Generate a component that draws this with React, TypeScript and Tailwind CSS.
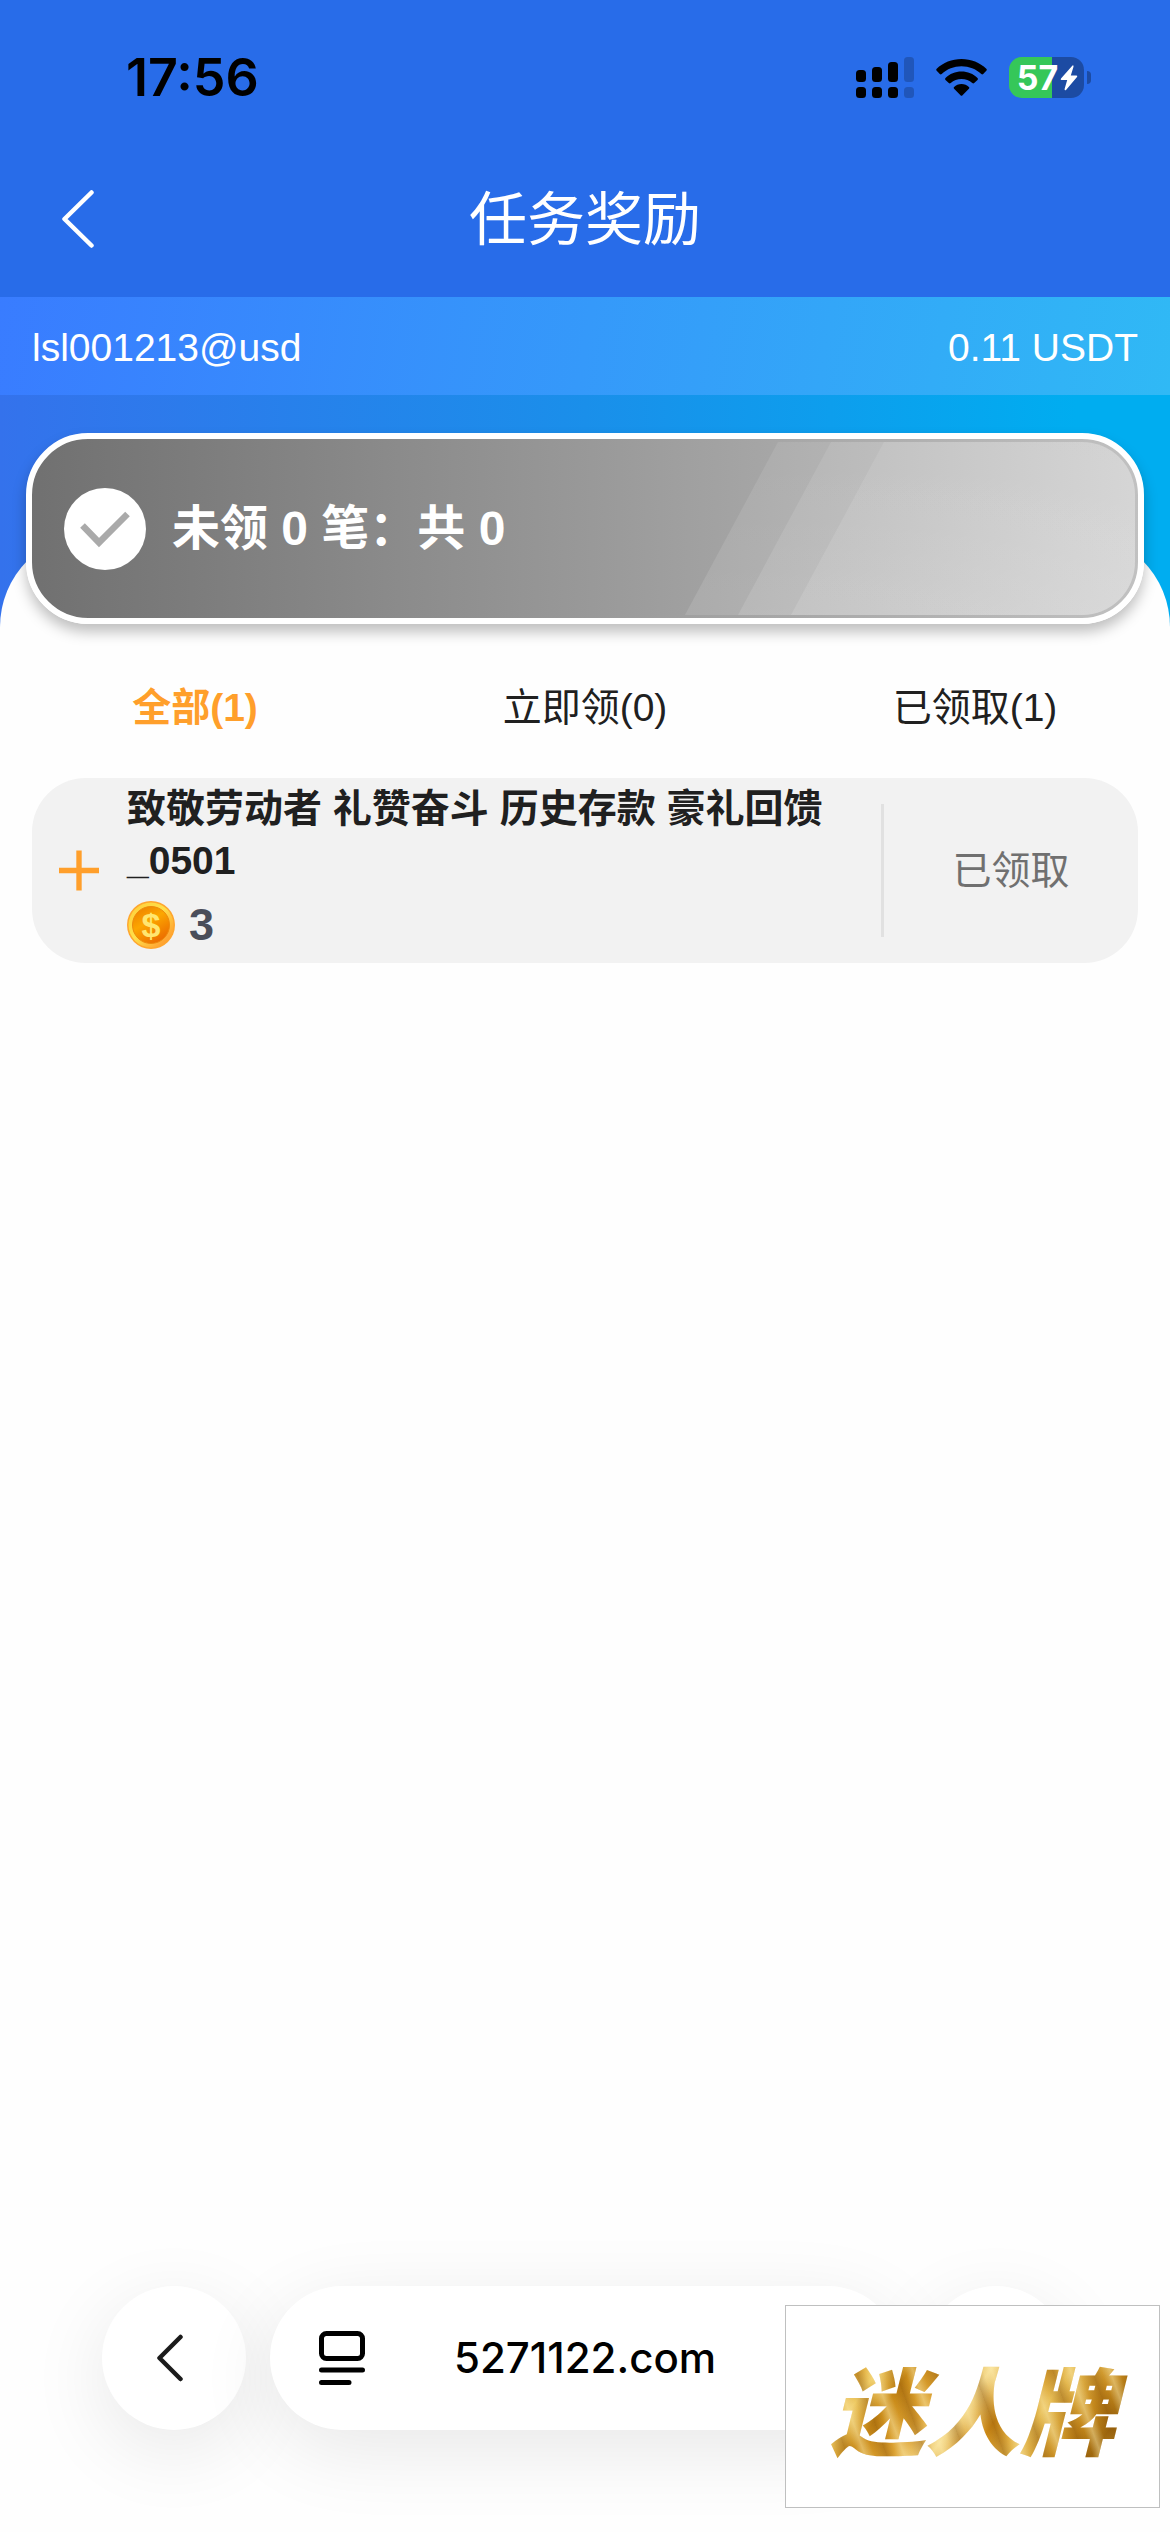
import React, { useState } from 'react';

const tabs = [
  { id: 'all', label: '全部', count: 1 },
  { id: 'ready', label: '立即领', count: 0 },
  { id: 'claimed', label: '已领取', count: 1 },
];

const rewards = [
  { id: 1, title: '致敬劳动者 礼赞奋斗 历史存款 豪礼回馈_0501', amount: 3, status: '已领取', tab: 'claimed' },
];

function SignalIcon() {
  return (
    <svg width="58" height="41" viewBox="0 0 58 41" aria-hidden="true">
      <rect x="0" y="13" width="10" height="12" rx="3.5" />
      <rect x="16" y="10" width="10" height="15" rx="3.5" />
      <rect x="32" y="5" width="10" height="20" rx="3.5" />
      <rect x="48" y="0" width="10" height="25" rx="3.5" opacity="0.2" />
      <rect x="0" y="30" width="10" height="11" rx="3.5" />
      <rect x="16" y="30" width="10" height="11" rx="3.5" />
      <rect x="32" y="30" width="10" height="11" rx="3.5" />
      <rect x="48" y="30" width="10" height="11" rx="3.5" opacity="0.2" />
    </svg>
  );
}

function WifiIcon() {
  return (
    <svg width="51" height="37" viewBox="0 0 51 37" aria-hidden="true">
      <path d="M25.500 0C35 0 44 3.600 50.300 9.800Q51.300 10.800 50.300 11.800L47.200 15Q46.300 15.900 45.300 15C40 10.100 33 7.300 25.500 7.300S11 10.100 5.700 15Q4.700 15.900 3.800 15L.7 11.800Q-.3 10.800 .7 9.800C7 3.600 16 0 25.500 0Z" />
      <path d="M25.500 12.500C31.700 12.500 37.300 14.900 41.500 18.900Q42.500 19.900 41.500 20.900L38.200 24.100Q37.300 25 36.300 24.100C33.400 21.500 29.600 20 25.500 20S17.600 21.500 14.700 24.100Q13.700 25 12.800 24.100L9.500 20.900Q8.500 19.900 9.500 18.900C13.700 14.900 19.300 12.500 25.500 12.500Z" />
      <path d="M25.500 25C28.400 25 31 26.100 32.900 27.900Q33.800 28.800 32.900 29.700L26.500 36.200Q25.500 37.200 24.500 36.200L18.100 29.700Q17.200 28.800 18.100 27.900C20 26.100 22.600 25 25.500 25Z" />
    </svg>
  );
}

function Battery() {
  return (
    <div className="flex items-center gap-[3px]">
      <div className="flex h-[41px] w-[75px] items-center justify-center gap-0.5 rounded-[13px] bg-[linear-gradient(90deg,#35c759_43px,#1c4ba3_43px)] pl-0.5 text-white">
        <span className="text-[34px] leading-none font-bold">57</span>
        <svg width="18" height="28" viewBox="0 0 18 26" fill="currentColor" aria-hidden="true">
          <path d="M12.500 0.500L1 13.500Q0 15 1.700 15H7.200L4.600 24Q4.500 26 6 25L17 12Q18 10.500 16.400 10.500H10.800L13.500 1.800Q13.700 -.4 12.500 .5Z" />
        </svg>
      </div>
      <div className="h-[13px] w-1 rounded-r-full bg-[#1c4ba3]" />
    </div>
  );
}

function CoinIcon() {
  return (
    <svg width="48" height="48" viewBox="0 0 48 48" aria-hidden="true">
      <defs>
        <linearGradient id="rim" x1="0" y1="0.2" x2="0.8" y2="1">
          <stop offset="0" stopColor="#ffd13c" />
          <stop offset="0.45" stopColor="#ffe04a" />
          <stop offset="1" stopColor="#ff9a2e" />
        </linearGradient>
        <linearGradient id="face" x1="0.2" y1="0" x2="0.8" y2="1">
          <stop offset="0" stopColor="#ee8200" />
          <stop offset="0.4" stopColor="#fca600" />
          <stop offset="1" stopColor="#ea6500" />
        </linearGradient>
      </defs>
      <circle cx="24" cy="24" r="24" fill="#ffa62e" />
      <circle cx="24" cy="24" r="22.500" fill="url(#rim)" />
      <circle cx="24" cy="24" r="18.500" fill="url(#face)" stroke="#ee8a0c" />
      <text x="24" y="36" textAnchor="middle" fontSize="34" fontWeight="700" fill="#ffe670" className="font-['Liberation_Sans',sans-serif]">
        $
      </text>
    </svg>
  );
}

function StatusBar() {
  return (
    <div className="flex h-[155px] items-center justify-between pr-[79px] pl-[126px] font-['Inter',sans-serif] text-black">
      <span className="text-[52px] leading-none font-semibold">17:56</span>
      <div className="flex items-center gap-[22px]">
        <SignalIcon />
        <WifiIcon />
        <Battery />
      </div>
    </div>
  );
}

function ClaimBanner() {
  return (
    <button
      type="button"
      className="relative flex h-[191px] items-center gap-[26px] rounded-[62px] border-[6px] border-white bg-[linear-gradient(90deg,#707070,#c1c1c1)] bg-origin-border pl-8 text-left shadow-[0_8px_14px_rgba(0,0,0,0.25)]"
    >
      <svg className="absolute top-[3px] right-[3px]" width="450" height="173" viewBox="0 0 450 173" aria-hidden="true">
        <defs>
          <linearGradient id="sheen" x1="0" y1="0" x2="1" y2="1">
            <stop offset="0" stopColor="#fff" stopOpacity="0.08" />
            <stop offset="1" stopColor="#fff" stopOpacity="0.16" />
          </linearGradient>
        </defs>
        <path d="M93 0H397A53 53 0 0 1 450 53V120A53 53 0 0 1 397 173H0Z" fill="url(#sheen)" />
        <path d="M146 0H397A53 53 0 0 1 450 53V120A53 53 0 0 1 397 173H53Z" fill="url(#sheen)" />
        <path d="M199 0H397A53 53 0 0 1 450 53V120A53 53 0 0 1 397 173H106Z" fill="url(#sheen)" />
      </svg>
      <svg width="82" height="82" viewBox="0 0 82 82" aria-hidden="true">
        <circle cx="41" cy="41" r="41" fill="#fff" />
        <path d="M18.500 37.500L35 54.500L63.500 26" fill="none" stroke="#aaaaaa" strokeWidth="6.500" />
      </svg>
      <span className="relative text-5xl leading-none font-bold text-white">未领 0 笔：共 0</span>
    </button>
  );
}

function RewardCard({ title, amount, status }: { title: string; amount: number; status: string }) {
  return (
    <li className="flex min-h-[185px] items-center rounded-[54px] bg-[#f2f2f2]">
      <button type="button" aria-label="展开" className="flex w-[95px] justify-center pr-7 pl-[27px] text-[#ff9f2b]">
        <svg width="41" height="41" viewBox="0 0 41 41" stroke="currentColor" strokeWidth="5.500" aria-hidden="true">
          <path d="M20.500 0V41M0 20.500H41" />
        </svg>
      </button>
      <div className="flex flex-1 flex-col gap-3.5 pr-3 pb-2.5">
        <h2 className="text-[39px] leading-[52px] font-bold text-[#202020]">{title}</h2>
        <div className="flex items-center gap-3.5">
          <CoinIcon />
          <span className="text-[45px] leading-[48px] font-bold text-[#4a4e5a]">{amount}</span>
        </div>
      </div>
      <div className="h-[133px] w-[3px] bg-[#e1e1e1]" />
      <span className="w-[254px] text-center text-[39px] leading-[52px] text-[#707070]">{status}</span>
    </li>
  );
}

function BrowserBar() {
  return (
    <footer className="relative flex gap-6 px-[102px] pb-[102px] font-['Inter',sans-serif]">
      <button
        type="button"
        aria-label="后退"
        className="flex size-36 items-center justify-center rounded-full bg-white pr-2 shadow-[0_20px_80px_rgba(0,0,0,0.09)]"
      >
        <svg width="26" height="50" viewBox="0 0 26 50" fill="none" stroke="#1b1b1b" strokeWidth="4.500" strokeLinecap="round" strokeLinejoin="round" aria-hidden="true">
          <path d="M23.500 4L2.500 25L23.500 46" />
        </svg>
      </button>
      <div className="flex h-36 flex-1 items-center rounded-full bg-white pl-[49px] shadow-[0_20px_80px_rgba(0,0,0,0.09)]">
        <button type="button" aria-label="页面菜单">
          <svg width="46" height="54" viewBox="0 0 46 54" fill="none" stroke="#000" strokeWidth="5" strokeLinecap="round" aria-hidden="true">
            <rect x="2.500" y="2.500" width="41" height="25" rx="5" />
            <path d="M2.500 39H43.500M2.500 51.500H30" />
          </svg>
        </button>
        <a href="#" className="flex-1 pr-[95px] text-center text-[42px] leading-none font-medium text-black">
          5271122.com
        </a>
      </div>
      <button type="button" aria-label="更多" className="size-36 rounded-full bg-white shadow-[0_20px_80px_rgba(0,0,0,0.09)]" />
      <div className="absolute right-2.5 bottom-6 flex h-[203px] w-[375px] items-center justify-center border border-[#bfc0c0] bg-white">
        <span className="bg-[repeating-linear-gradient(70deg,rgba(120,66,0,0.35)_0px,transparent_9px,rgba(255,240,180,0.45)_17px,transparent_26px,rgba(120,66,0,0.3)_37px),linear-gradient(125deg,#b57a14_0%,#d99a22_12%,#efcb66_20%,#c98a18_28%,#dca233_38%,#f6dc90_48%,#cf8c18_58%,#e7bd55_68%,#c68a1e_80%,#a0690f_88%,#e0b24a_100%)] bg-clip-text px-5 font-['Noto_Sans_CJK_SC',sans-serif] text-[95px] leading-[110px] font-black text-transparent italic">
          迷人牌
        </span>
      </div>
    </footer>
  );
}

export default function App() {
  const [activeTab, setActiveTab] = useState('all');
  const visible = rewards.filter((r) => activeTab === 'all' || r.tab === activeTab);

  return (
    <div className="flex min-h-screen flex-col bg-[#286ce9] font-['Liberation_Sans','Noto_Sans_CJK_SC',sans-serif]">
      <StatusBar />
      <header className="grid h-[142px] grid-cols-[94px_1fr_94px] items-start text-white">
        <button type="button" aria-label="返回" className="flex h-32 items-center justify-end">
          <svg width="32" height="58" viewBox="0 0 32 58" fill="none" stroke="currentColor" strokeWidth="4.500" strokeLinecap="round" strokeLinejoin="round" aria-hidden="true">
            <path d="M29.500 2.500L2.500 29L29.500 55.500" />
          </svg>
        </button>
        <h1 className="text-center text-[58px] leading-[130px]">任务奖励</h1>
      </header>
      <div className="flex h-[98px] items-center justify-between bg-[linear-gradient(100deg,#397cff,#3599fa_50%,#30b9f5)] px-8 pt-1 text-[39px] text-white">
        <span>lsl001213@usd</span>
        <span>0.11 USDT</span>
      </div>

      <div className="flex flex-1 flex-col bg-[linear-gradient(90deg,#3472ec,#1a8fea_50%,#00adf0_92%)] pt-[138px]">
        <main className="flex flex-1 flex-col rounded-t-[94px] bg-[#fefefe]">
          <div className="-mt-[100px] flex flex-col px-[26px]">
            <ClaimBanner />
          </div>
          <div role="tablist" className="grid h-[154px] grid-cols-3 items-center pt-3.5">
            {tabs.map((tab) => (
              <button
                key={tab.id}
                type="button"
                role="tab"
                aria-selected={activeTab === tab.id}
                onClick={() => setActiveTab(tab.id)}
                className={
                  activeTab === tab.id
                    ? 'text-[39px] leading-[52px] font-bold text-[#ff9f2b]'
                    : 'text-[39px] leading-[52px] text-[#202020]'
                }
              >
                {tab.label}({tab.count})
              </button>
            ))}
          </div>
          <ul className="flex flex-col gap-6 px-8">
            {visible.map((r) => (
              <RewardCard key={r.id} title={r.title} amount={r.amount} status={r.status} />
            ))}
          </ul>
          <div className="mt-auto">
            <BrowserBar />
          </div>
        </main>
      </div>
    </div>
  );
}
